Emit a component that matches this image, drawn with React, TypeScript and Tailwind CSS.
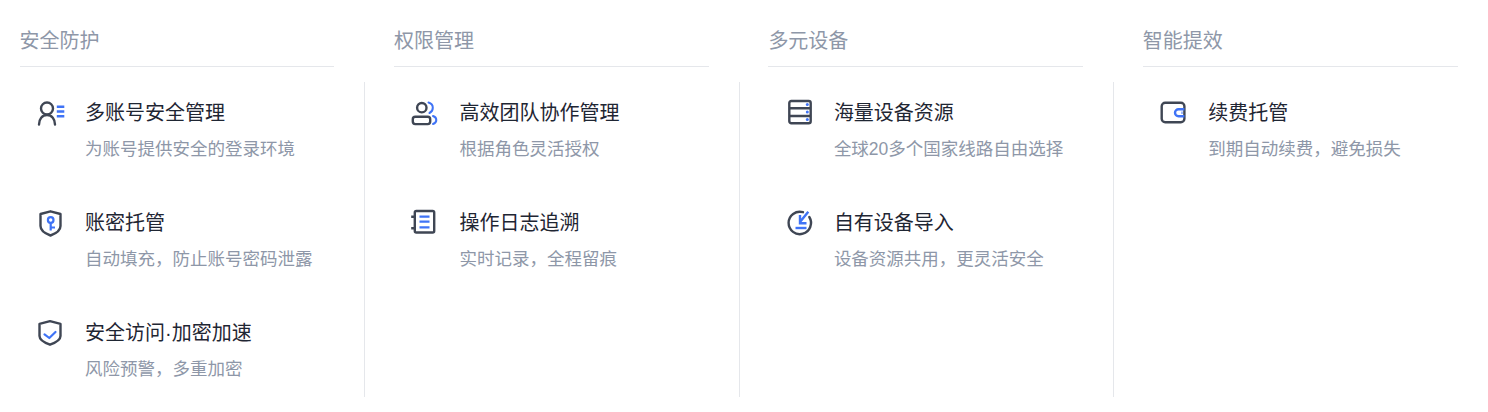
const stroke = '#3f4654';
const blue = '#3f73f6';

function IconUsers() {
  return (
    <svg width="30" height="30" viewBox="0 0 30 30" fill="none" strokeWidth="2.4" strokeLinecap="round">
      <circle cx="12" cy="10.500" r="6" stroke={stroke} />
      <path d="M4 26.500c0-5.500 3.200-9.500 8-9.500s8 4 8 9.500" stroke={stroke} />
      <path d="M21.800 8.700h7.500M21.800 13.500h7.500M21.800 18.200h7.500" stroke={blue} strokeLinecap="butt" strokeWidth="2.400" />
    </svg>
  );
}

function IconShieldKey() {
  return (
    <svg width="30" height="30" viewBox="0 0 30 30" fill="none" strokeWidth="2.400" strokeLinejoin="round">
      <path d="M15.500 3.300 25.500 6V18C25.500 22 21 25.500 15.500 27.500 10 25.500 5.500 22 5.500 18V6Z" stroke={stroke} />
      <circle cx="15.700" cy="12" r="2.800" stroke={blue} strokeWidth="2.200" />
      <path d="M15.700 14.800V22.500M15.700 19.500h4.300" stroke={blue} strokeWidth="2.200" />
    </svg>
  );
}

function IconShieldCheck() {
  return (
    <svg width="30" height="30" viewBox="0 0 30 30" fill="none" strokeWidth="2.400" strokeLinejoin="round">
      <path d="M15 3.200 25.500 5.800V18C25.500 21.500 21 24.500 15 26.700 9 24.500 4.500 21.500 4.500 18V5.800Z" stroke={stroke} />
      <path d="M9.500 16.300 14.300 20 20.500 14" stroke={blue} strokeWidth="2.200" strokeLinecap="round" />
    </svg>
  );
}

function IconTeam() {
  return (
    <svg width="30" height="30" viewBox="-0.500 0 30 30" fill="none" strokeWidth="2.400">
      <circle cx="12.300" cy="9.700" r="4.700" stroke={stroke} />
      <rect x="3.300" y="18.700" width="17.400" height="7.400" rx="2.500" stroke={stroke} />
      <path d="M19 4.500c2.800.800 4.300 2.800 4.300 5.200s-1.300 4.300-3.300 5.300" stroke={blue} strokeWidth="2" strokeLinecap="round" />
      <path d="M23.500 18c2.200.700 3.300 2.200 3.300 4s-1.100 3.300-3.300 4" stroke={blue} strokeWidth="2" strokeLinecap="round" />
    </svg>
  );
}

function IconLog() {
  return (
    <svg width="30" height="30" viewBox="-0.500 0 30 30" fill="none" strokeWidth="2.400">
      <rect x="5.300" y="3" width="19.400" height="21.500" rx="1.500" stroke={stroke} />
      <path d="M1.700 8.700h4M1.700 20.300h4" stroke={stroke} />
      <path d="M10 8.700h10M10 13.700h10M10 19.300h10" stroke={blue} strokeWidth="2.200" />
    </svg>
  );
}

function IconServer() {
  return (
    <svg width="30" height="30" viewBox="-1 0 30 30" fill="none" strokeWidth="2.400">
      <rect x="4.300" y="3" width="21.400" height="22.300" rx="2" stroke={stroke} />
      <path d="M4.300 10.300h21.400M4.300 18h21.400" stroke={stroke} />
      <circle cx="22.300" cy="6.500" r="1.500" fill={blue} />
      <circle cx="22.300" cy="14" r="1.500" fill={blue} />
      <circle cx="22.300" cy="21.500" r="1.500" fill={blue} />
    </svg>
  );
}

function IconImport() {
  return (
    <svg width="30" height="30" viewBox="-1 0 30 30" fill="none" strokeWidth="2.400" strokeLinecap="round">
      <path d="M18 4.200A11.200 11.200 0 1 0 24.300 9" stroke={stroke} />
      <path d="M23.300 3.700 15 14M15 7V15.300H21.500" stroke={blue} strokeLinecap="butt" />
      <path d="M10.500 20h11" stroke={blue} strokeLinecap="butt" />
    </svg>
  );
}

function IconWallet() {
  return (
    <svg width="30" height="30" viewBox="-1.700 0 30 30" fill="none" strokeWidth="2.400">
      <rect x="2" y="4.700" width="22.700" height="19.600" rx="3.500" stroke={stroke} />
      <path d="M24.700 11.300H18.800a3.500 3.500 0 0 0 0 7h5.900" stroke={blue} />
      <path d="M21.300 14.800h2" stroke={blue} strokeOpacity="0.5" />
    </svg>
  );
}

const columns = [
  {
    heading: '安全防护',
    items: [
      { icon: <IconUsers />, title: '多账号安全管理', desc: '为账号提供安全的登录环境' },
      { icon: <IconShieldKey />, title: '账密托管', desc: '自动填充，防止账号密码泄露' },
      { icon: <IconShieldCheck />, title: '安全访问·加密加速', desc: '风险预警，多重加密' },
    ],
  },
  {
    heading: '权限管理',
    items: [
      { icon: <IconTeam />, title: '高效团队协作管理', desc: '根据角色灵活授权' },
      { icon: <IconLog />, title: '操作日志追溯', desc: '实时记录，全程留痕' },
    ],
  },
  {
    heading: '多元设备',
    items: [
      { icon: <IconServer />, title: '海量设备资源', desc: '全球20多个国家线路自由选择' },
      { icon: <IconImport />, title: '自有设备导入', desc: '设备资源共用，更灵活安全' },
    ],
  },
  {
    heading: '智能提效',
    items: [{ icon: <IconWallet />, title: '续费托管', desc: '到期自动续费，避免损失' }],
  },
];

export default function App() {
  return (
    <div className="flex h-[412px] w-[1488px] overflow-hidden bg-white pl-[19.6px] font-['Liberation_Sans','Noto_Sans_CJK_SC',sans-serif]">
      {columns.map((col, i) => (
        <section key={col.heading} className="w-[374.4px] shrink-0">
          <h3 className="h-[67px] w-[314.8px] border-b border-[#e5e7eb] pt-[27px] text-[20px] leading-[28px] font-normal text-[#8e97a8]">
            {col.heading}
          </h3>
          <div
            className={
              i < 3
                ? 'mt-[15px] flex h-[315px] w-[345.8px] flex-col gap-[50px] border-r border-[#e5e7eb] pt-4 pl-[15.5px]'
                : 'mt-[15px] flex h-[315px] w-[345.8px] flex-col gap-[50px] pt-4 pl-[15.5px]'
            }
          >
            {col.items.map((item) => (
              <div key={item.title} className="flex h-[60px] items-start gap-[20px]">
                <span className="flex h-[30px] w-[30px] shrink-0 items-center justify-center">{item.icon}</span>
                <div>
                  <div className="text-[20px] leading-[30px] text-[#1f2633]">{item.title}</div>
                  <div className="mt-[9px] text-[17.5px] leading-[24px] whitespace-nowrap text-[#8e97a8]">{item.desc}</div>
                </div>
              </div>
            ))}
          </div>
        </section>
      ))}
    </div>
  );
}
